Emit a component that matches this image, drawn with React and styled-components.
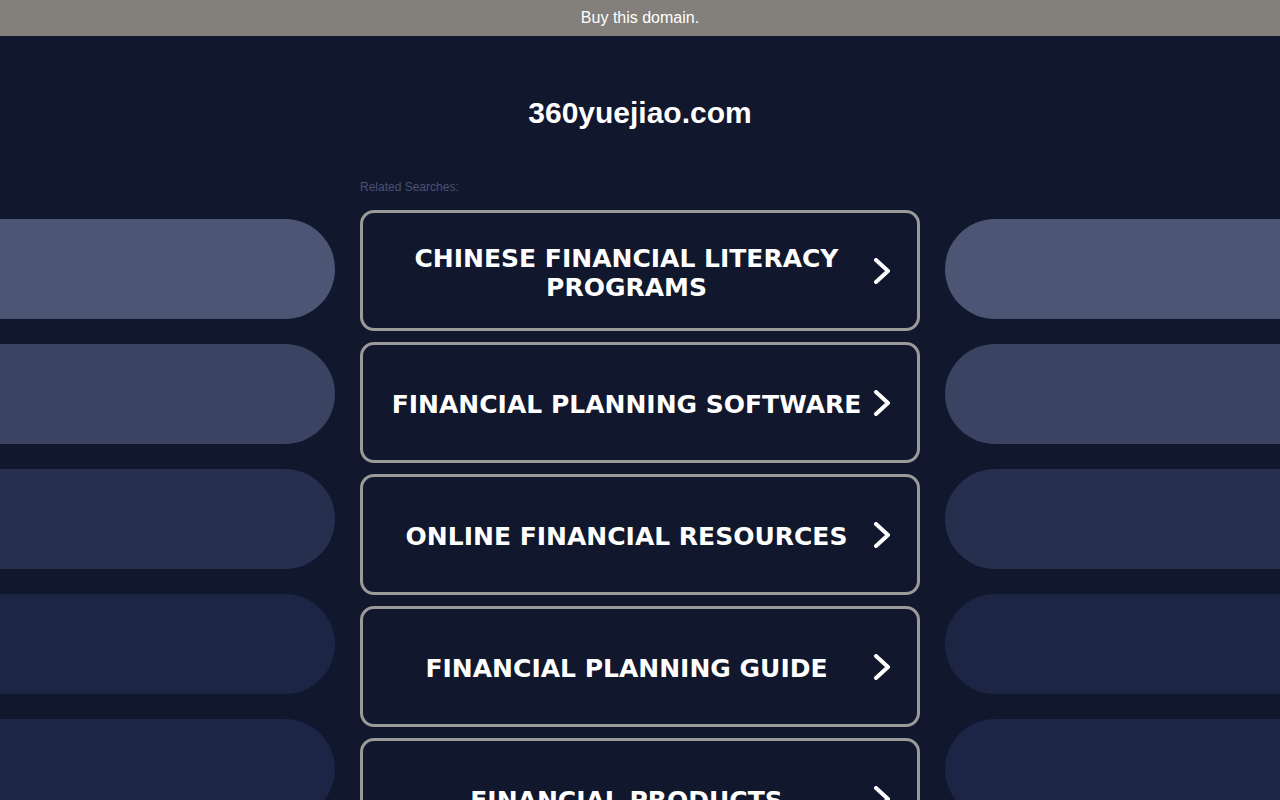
import React from 'react';
import styled, { createGlobalStyle } from 'styled-components';

const GlobalStyle = createGlobalStyle`
  html, body {
    margin: 0;
    padding: 0;
    background: #11172d;
  }
  body {
    font-family: "Liberation Sans", Arial, sans-serif;
  }
`;

const SPage = styled.div`
  width: 100%;
  min-height: 100vh;
  background: #11172d;
`;
const STopBar = styled.a`
  display: flex;
  align-items: center;
  justify-content: center;
  height: 36px;
  background: #837f7b;
  color: #ffffff;
  font-size: 16px;
  text-decoration: none;
`;
const STitle = styled.h1`
  margin: 0;
  padding: 59px 0 0;
  height: 85px;
  text-align: center;
  color: #ffffff;
  font-size: 30px;
  line-height: 36px;
  font-weight: 700;
`;
const SGrid = styled.div`
  display: grid;
  grid-template-columns: 335px 560px 335px;
  column-gap: 25px;
`;
const SSide = styled.div`
  display: flex;
  flex-direction: column;
  gap: 25px;
  padding-top: 39px;
`;
const SPill = styled.div`
  height: 100px;
  background: ${p => p.color};
  border-radius: ${p => (p.right ? '50px 0 0 50px' : '0 50px 50px 0')};
`;
const SCenter = styled.div`
  display: flex;
  flex-direction: column;
`;
const SLabel = styled.div`
  color: #4a5274;
  font-size: 12px;
  line-height: 14px;
  margin-bottom: 16px;
`;
const SList = styled.div`
  display: flex;
  flex-direction: column;
  gap: 11px;
`;
const SLink = styled.a`
  display: flex;
  align-items: center;
  box-sizing: border-box;
  height: 121px;
  padding: 0 25px 0 25px;
  border: 3px solid #9a9a9a;
  border-radius: 14px;
  text-decoration: none;
  color: #ffffff;
`;
const SLinkText = styled.span`
  flex: 1;
  text-align: center;
  font-family: "DejaVu Sans", Verdana, sans-serif;
  font-weight: 700;
  font-size: 25px;
  line-height: 29px;
  margin-right: 7px;
  padding-top: 4px;
`;
const SChevron = styled.svg`
  width: 20px;
  height: 26px;
  flex-shrink: 0;
`;

const pillColors = ['#4c5674', '#3a4361', '#262f4e', '#1d2545', '#1c2545'];

const links = [
  'CHINESE FINANCIAL LITERACY PROGRAMS',
  'FINANCIAL PLANNING SOFTWARE',
  'ONLINE FINANCIAL RESOURCES',
  'FINANCIAL PLANNING GUIDE',
  'FINANCIAL PRODUCTS'
];

function Chevron() {
  return (
    <SChevron viewBox="0 0 20 26">
      <path
        d="M4 2 L16 13 L4 24"
        fill="none"
        stroke="#ffffff"
        strokeWidth="4"
        strokeLinecap="round"
        strokeLinejoin="round"
      />
    </SChevron>
  );
}

export default function App() {
  return (
    <>
      <GlobalStyle />
      <SPage>
        <STopBar href="#">Buy this domain.</STopBar>
        <STitle>360yuejiao.com</STitle>
        <SGrid>
          <SSide>
            {pillColors.map(c => (
              <SPill key={c} color={c} />
            ))}
          </SSide>
          <SCenter>
            <SLabel>Related Searches:</SLabel>
            <SList>
              {links.map(l => (
                <SLink key={l} href="#">
                  <SLinkText>{l}</SLinkText>
                  <Chevron />
                </SLink>
              ))}
            </SList>
          </SCenter>
          <SSide>
            {pillColors.map(c => (
              <SPill key={c} color={c} right />
            ))}
          </SSide>
        </SGrid>
      </SPage>
    </>
  );
}
